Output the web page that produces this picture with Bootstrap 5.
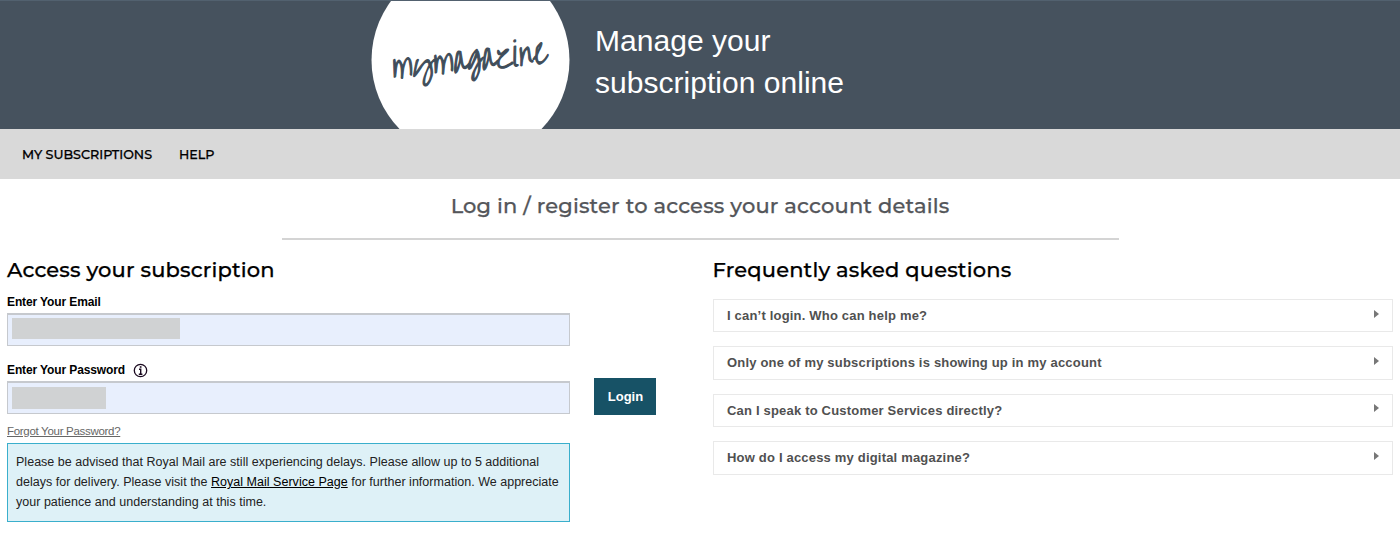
<!DOCTYPE html>
<html lang="en">
<head>
<meta charset="utf-8">
<meta name="viewport" content="width=device-width, initial-scale=1">
<title>My Magazine - Manage your subscription online</title>
<link rel="stylesheet" href="https://cdn.jsdelivr.net/npm/bootstrap@5.3.0/dist/css/bootstrap.min.css">
<style>
body{font-family:"Liberation Sans",Arial,sans-serif;color:#222;background:#fff;overflow:hidden}
.geo{font-family:Montserrat,Inter,sans-serif;font-weight:500;-webkit-text-stroke:.25px currentColor}
.banner{height:129px;background:#46525e;padding-left:371px;border-top:1px solid #52616f}
.brand-logo{width:199px;height:128px}
.tagline{font-size:30px;line-height:42px;color:#fff;margin:19px 0 0 25px;font-weight:400;letter-spacing:.03px}
.main-nav{height:50px;background:#d9d9d9;padding:1px 0 0 22px;gap:27px;font-size:12.7px}
.main-nav a{color:#000;padding:0}
.page-title{font-size:21px;line-height:26px;color:#54565a;padding-top:14px;margin:0;letter-spacing:.16px}
.rule{width:837px;height:2px;background:#d4d4d4;margin:19px auto 0}
.panels{padding:16px 7px 0}
.left-col{width:705.5px}
.form-col{width:563px}
h2.geo{font-size:21px;line-height:28px;color:#000;margin:0;letter-spacing:.15px}
.field-label{font-size:12px;line-height:16px;font-weight:700;color:#000;margin:10px 0 3px;letter-spacing:-.12px}
.field-label-lower{margin-top:16px}
.field-box{height:33px;border:1px solid #c6c9ce;border-top-width:2px;background:#e8effd;padding:3px 4px}
.masked{height:21px;background:#d0d2d3}
.masked-lower{height:22px;margin-top:1px}
.info-icon{margin-left:8px}
.forgot{font-size:11.5px;line-height:16px;color:#666;letter-spacing:-.3px;margin-top:9px}
.notice{border:1px solid #3aafcc;background:#def1f7;font-size:12.5px;line-height:20px;padding:8px;margin-top:4px;height:79px;white-space:nowrap;color:#222;letter-spacing:.02px}
.login-btn{width:62px;height:37px;background:#175266;border-radius:0;color:#fff;font-size:13px;font-weight:700;padding:0 0 0 1px;margin:122px 0 0 24px}
.faq-list{gap:14px;margin-top:15px}
.faq-item{height:33.4px;border:1px solid #e9e9e9;padding:0 13px 0 13.5px;font-size:13px;font-weight:700;color:#505050;letter-spacing:.19px}
.faq-item svg{margin-top:-4px}
</style>
</head>
<body>
<header class="banner d-flex align-items-start">
  <svg class="brand-logo flex-shrink-0" viewBox="0 0 199 128" role="img" aria-label="mymagazine">
    <circle cx="99.5" cy="59" r="99" fill="#fff"/>
    <text transform="translate(21.5 78.5) rotate(-6) skewX(-7) scale(1 1.2)" font-family="'Over the Rainbow','Shadows Into Light',Caveat,cursive" font-size="27" textLength="155" lengthAdjust="spacingAndGlyphs" fill="#3f4d5a" stroke="#3f4d5a" stroke-width="1" stroke-linejoin="round">mymagazine</text>
  </svg>
  <h1 class="tagline">Manage your<br>subscription online</h1>
</header>
<nav class="main-nav nav geo align-items-center">
  <a class="nav-link" href="#">MY SUBSCRIPTIONS</a>
  <a class="nav-link" href="#">HELP</a>
</nav>
<main>
  <p class="page-title geo text-center">Log in / register to access your account details</p>
  <div class="rule"></div>
  <div class="panels d-flex">
    <section class="left-col d-flex align-items-start flex-shrink-0">
      <form class="form-col">
        <h2 class="geo">Access your subscription</h2>
        <div class="field-label">Enter Your Email</div>
        <div class="field-box"><div class="masked" style="width:168px"></div></div>
        <div class="field-label field-label-lower d-flex align-items-center">Enter Your Password
          <svg class="info-icon" width="15" height="15" viewBox="0 0 15 15" fill="none" stroke="#1b0a20"><circle cx="7.5" cy="7.5" r="6.2" stroke-width="1.3"/><path d="M6 6.2h1.7v5M5.8 11.2h3.6" stroke-width="1.4"/><path d="M6.8 4h1.7" stroke-width="1.6"/></svg>
        </div>
        <div class="field-box"><div class="masked masked-lower" style="width:94px"></div></div>
        <div class="d-flex"><a class="forgot" href="#">Forgot Your Password?</a></div>
        <div class="notice">Please be advised that Royal Mail are still experiencing delays. Please allow up to 5 additional<br>delays for delivery. Please visit the <a class="text-black" href="#">Royal Mail Service Page</a> for further information. We appreciate<br>your patience and understanding at this time.</div>
      </form>
      <button class="btn login-btn" type="button">Login</button>
    </section>
    <section class="flex-grow-1">
      <h2 class="geo">Frequently asked questions</h2>
      <div class="faq-list d-flex flex-column">
        <div class="faq-item d-flex align-items-center justify-content-between"><span>I can’t login. Who can help me?</span><svg width="5" height="8"><path d="M0 0 5 4 0 8z" fill="#777"/></svg></div>
        <div class="faq-item d-flex align-items-center justify-content-between"><span>Only one of my subscriptions is showing up in my account</span><svg width="5" height="8"><path d="M0 0 5 4 0 8z" fill="#777"/></svg></div>
        <div class="faq-item d-flex align-items-center justify-content-between"><span>Can I speak to Customer Services directly?</span><svg width="5" height="8"><path d="M0 0 5 4 0 8z" fill="#777"/></svg></div>
        <div class="faq-item d-flex align-items-center justify-content-between"><span>How do I access my digital magazine?</span><svg width="5" height="8"><path d="M0 0 5 4 0 8z" fill="#777"/></svg></div>
      </div>
    </section>
  </div>
</main>
<script src="https://cdn.jsdelivr.net/npm/bootstrap@5.3.0/dist/js/bootstrap.bundle.min.js"></script>
</body>
</html>
